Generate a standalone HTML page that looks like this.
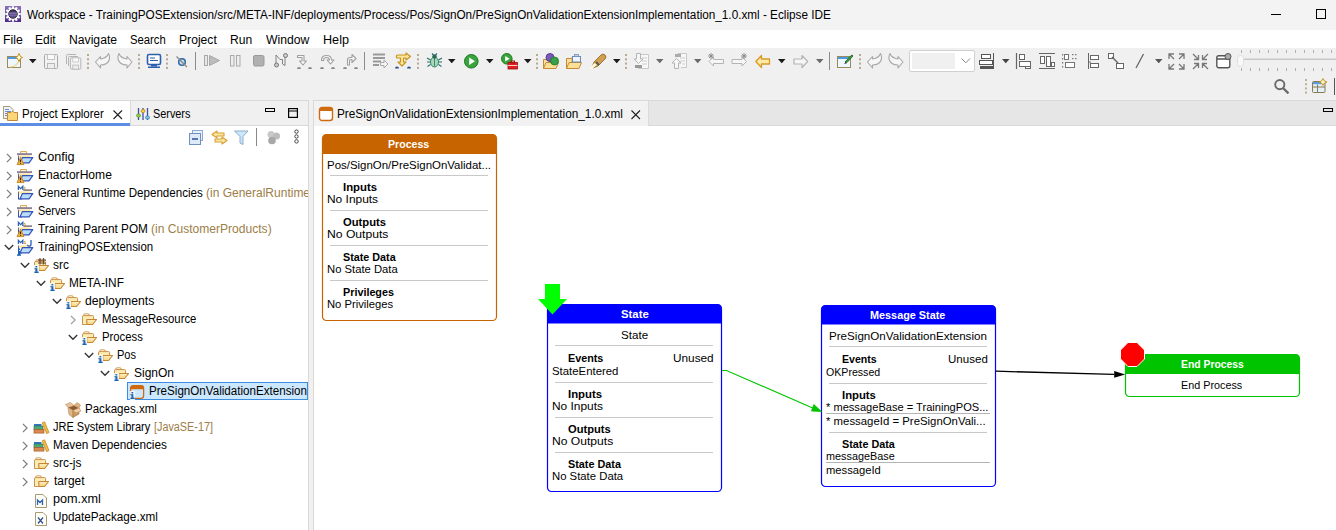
<!DOCTYPE html>
<html><head><meta charset="utf-8">
<style>
*{margin:0;padding:0;box-sizing:border-box}
html,body{width:1336px;height:530px;overflow:hidden;background:#f0f0f0;font-family:"Liberation Sans",sans-serif;font-size:12px;color:#000}
.a{position:absolute}
.t{position:absolute;white-space:nowrap;transform-origin:0 0}
svg{position:absolute;overflow:visible}
</style></head><body>
<!-- title bar -->
<div class="a" style="left:0;top:0;width:1336px;height:30px;background:#f3f3f3"></div>
<!-- menu bar -->
<div class="a" style="left:0;top:30px;width:1336px;height:18px;background:#fff"></div>
<!-- toolbar -->
<div class="a" style="left:0;top:48px;width:1336px;height:52px;background:#f0f0f0"></div>
<!-- left panel -->
<div class="a" style="left:0;top:100px;width:309px;height:430px;background:#fff;border-top:1px solid #d9d9d9;border-right:1px solid #d9d9d9"></div>
<div class="a" style="left:0;top:101px;width:308px;height:25px;background:#f0f0f0;border-bottom:1px solid #d9d9d9"></div>
<div class="a" style="left:0;top:101px;width:130px;height:25px;background:#fff"></div>
<div class="a" style="left:130px;top:101px;width:1px;height:25px;background:#dadada"></div>
<div class="a" style="left:0;top:123px;width:130px;height:3px;background:#5b8ee4"></div>
<!-- editor panel -->
<div class="a" style="left:313px;top:100px;width:1023px;height:430px;background:#fff;border-top:1px solid #d9d9d9;border-left:1px solid #d9d9d9"></div>
<div class="a" style="left:314px;top:101px;width:1022px;height:25px;background:#e6e6e6;border-bottom:1px solid #d9d9d9"></div>
<div class="a" style="left:314px;top:101px;width:334px;height:25px;background:#f2f2f2"></div>
<div class="a" style="left:648px;top:101px;width:1px;height:25px;background:#dadada"></div>
<!-- selection -->
<div class="a" style="left:127px;top:382px;width:181px;height:18px;background:#cce8ff;border:1px solid #3d8ee0"></div>
<svg style="left:322px;top:134px" width="175" height="187" viewBox="0 0 175 187" ><path d="M0.5 20 V4.5 A4 4 0 0 1 4.5 0.5 H170.5 A4 4 0 0 1 174.5 4.5 V20 Z" fill="#c86400"/><rect x="0.5" y="0.5" width="174" height="186" rx="4" ry="4" fill="none" stroke="#c86400" stroke-width="1.2"/></svg>
<svg style="left:547px;top:304px" width="175" height="188" viewBox="0 0 175 188" ><path d="M0.5 19.5 V4.5 A4 4 0 0 1 4.5 0.5 H170.5 A4 4 0 0 1 174.5 4.5 V19.5 Z" fill="#0000ff"/><rect x="0.5" y="0.5" width="174" height="187" rx="4" ry="4" fill="none" stroke="#0000ff" stroke-width="1.2"/></svg>
<svg style="left:821px;top:305px" width="175" height="182" viewBox="0 0 175 182" ><path d="M0.5 19.5 V4.5 A4 4 0 0 1 4.5 0.5 H170.5 A4 4 0 0 1 174.5 4.5 V19.5 Z" fill="#0000ff"/><rect x="0.5" y="0.5" width="174" height="181" rx="4" ry="4" fill="none" stroke="#0000ff" stroke-width="1.2"/></svg>
<svg style="left:1125px;top:354px" width="175" height="43" viewBox="0 0 175 43" ><path d="M0.5 20 V4.5 A4 4 0 0 1 4.5 0.5 H170.5 A4 4 0 0 1 174.5 4.5 V20 Z" fill="#00c400"/><rect x="0.5" y="0.5" width="174" height="42" rx="4" ry="4" fill="none" stroke="#00c400" stroke-width="1.2"/></svg>
<div class="a" style="left:330px;top:175px;width:158px;height:1px;background:#c8c8c8"></div>
<div class="a" style="left:330px;top:210px;width:158px;height:1px;background:#c8c8c8"></div>
<div class="a" style="left:330px;top:245px;width:158px;height:1px;background:#c8c8c8"></div>
<div class="a" style="left:330px;top:280px;width:158px;height:1px;background:#c8c8c8"></div>
<div class="a" style="left:555px;top:345px;width:158px;height:1px;background:#c8c8c8"></div>
<div class="a" style="left:555px;top:382px;width:158px;height:1px;background:#c8c8c8"></div>
<div class="a" style="left:555px;top:417px;width:158px;height:1px;background:#c8c8c8"></div>
<div class="a" style="left:555px;top:452px;width:158px;height:1px;background:#c8c8c8"></div>
<div class="a" style="left:829px;top:346px;width:158px;height:1px;background:#c8c8c8"></div>
<div class="a" style="left:829px;top:383px;width:158px;height:1px;background:#c8c8c8"></div>
<div class="a" style="left:829px;top:432px;width:158px;height:1px;background:#c8c8c8"></div>
<div class="a" style="left:826px;top:413px;width:164px;height:1px;background:#b4b4b4"></div>
<div class="a" style="left:826px;top:462px;width:164px;height:1px;background:#b4b4b4"></div>
<svg style="left:538px;top:283px" width="30" height="33" viewBox="0 0 30 33" ><path d="M7 1 H22 V16 H29 L14.5 31.5 L0 16 H7 Z" fill="#00ff00"/></svg>
<svg style="left:1120px;top:342px" width="26" height="26" viewBox="0 0 26 26" ><path d="M8 0.5 H17 L24.5 8 V17 L17 24.5 H8 L0.5 17 V8 Z" fill="#ff0000" stroke="#fff" stroke-width="1"/></svg>
<svg style="left:715px;top:360px" width="120" height="60" viewBox="0 0 120 60" ><path d="M7 10.5 H11.5 L100 49" fill="none" stroke="#00c400" stroke-width="1.1"/><path d="M106.5 51.5 L96.5 51 L98.8 44.5 Z" fill="#00c400" stroke="#00c400" stroke-width="0.8"/></svg>
<svg style="left:990px;top:360px" width="140" height="25" viewBox="0 0 140 25" ><path d="M6 11.2 L124 14.3" fill="none" stroke="#000" stroke-width="1.3"/><path d="M135.2 14.4 L124.2 11 L124.2 17.8 Z" fill="#000"/></svg>
<svg style="left:5px;top:6px" width="16" height="16" viewBox="0 0 16 16" ><defs><linearGradient id="lg" x1="0" y1="0" x2="0" y2="1"><stop offset="0" stop-color="#8a72b8"/><stop offset="0.5" stop-color="#6a4fa0"/><stop offset="1" stop-color="#4c2a8a"/></linearGradient><linearGradient id="lc" x1="0" y1="0" x2="0" y2="1"><stop offset="0" stop-color="#3a3058"/><stop offset="1" stop-color="#6a58a0"/></linearGradient></defs><rect x="0" y="0" width="16" height="16" fill="url(#lg)"/><g fill="#fff"><circle cx="8" cy="8" r="6"/><rect x="6.9" y="0.3" width="2.2" height="3" transform="rotate(0 8 8)"/><rect x="6.9" y="0.3" width="2.2" height="3" transform="rotate(30 8 8)"/><rect x="6.9" y="0.3" width="2.2" height="3" transform="rotate(60 8 8)"/><rect x="6.9" y="0.3" width="2.2" height="3" transform="rotate(90 8 8)"/><rect x="6.9" y="0.3" width="2.2" height="3" transform="rotate(120 8 8)"/><rect x="6.9" y="0.3" width="2.2" height="3" transform="rotate(150 8 8)"/><rect x="6.9" y="0.3" width="2.2" height="3" transform="rotate(180 8 8)"/><rect x="6.9" y="0.3" width="2.2" height="3" transform="rotate(210 8 8)"/><rect x="6.9" y="0.3" width="2.2" height="3" transform="rotate(240 8 8)"/><rect x="6.9" y="0.3" width="2.2" height="3" transform="rotate(270 8 8)"/><rect x="6.9" y="0.3" width="2.2" height="3" transform="rotate(300 8 8)"/><rect x="6.9" y="0.3" width="2.2" height="3" transform="rotate(330 8 8)"/></g><circle cx="8" cy="8" r="4.3" fill="url(#lc)" stroke="#111" stroke-width="0.8"/><rect x="4" y="6.6" width="8" height="1" fill="#9a8ac8"/><rect x="4" y="8.6" width="8" height="1" fill="#8a78b8"/></svg>
<div class="a" style="left:1271px;top:14px;width:10px;height:1px;background:#000"></div>
<div class="a" style="left:1316px;top:9px;width:10px;height:10px;border:1px solid #000"></div>
<svg style="left:2px;top:106px" width="16" height="16" viewBox="0 0 16 16" ><path d="M1.5 0.5 H8 L11 3.5 V12.5 H1.5 Z" fill="#eef2fa" stroke="#a89a72"/><g stroke="#6a8fd0"><path d="M3 3.5 H7 M3 5.5 H9 M3 7.5 H9 M3 9.5 H9"/></g><path d="M5.5 6.5 H9 L10 5.5 H11 L12 6.5 H15.5 V14.5 H5.5 Z" fill="#fbd677" stroke="#c1873a"/></svg>
<svg style="left:113px;top:110px" width="10" height="10" viewBox="0 0 10 10" ><path d="M0.5 0.5 L9 9 M9 0.5 L0.5 9" stroke="#222" stroke-width="1.1"/></svg>
<svg style="left:136px;top:107px" width="14" height="14" viewBox="0 0 14 14" ><g stroke="#3d4fa0" stroke-width="1.3"><path d="M2.5 1 V13 M7 1 V13 M11.5 1 V13"/></g><rect x="0.5" y="7" width="4" height="3" rx="1.5" fill="#9ad05a" stroke="#5a9a2a" stroke-width="0.8"/><rect x="5" y="2.5" width="4" height="3" rx="1.5" fill="#f7d047" stroke="#b88b10" stroke-width="0.8"/><rect x="9.5" y="9" width="4" height="3" rx="1.5" fill="#7cc3ea" stroke="#3a86b8" stroke-width="0.8"/></svg>
<div class="a" style="left:265px;top:108px;width:10px;height:4px;border:1.3px solid #000"></div>
<svg style="left:288px;top:108px" width="10" height="10" viewBox="0 0 10 10" ><rect x="0.6" y="0.6" width="8.8" height="8.8" fill="none" stroke="#000" stroke-width="1.2"/><path d="M0.5 3 H9.5" stroke="#000" stroke-width="1"/></svg>
<svg style="left:189px;top:130px" width="15" height="15" viewBox="0 0 15 15" ><rect x="3.5" y="0.5" width="10" height="10" fill="#e8f0fa" stroke="#8aa8d0"/><rect x="0.5" y="3.5" width="11" height="11" fill="#dfeaf8" stroke="#6e8fc0"/><path d="M3 9 H9" stroke="#2a4f9a" stroke-width="1.5"/></svg>
<svg style="left:211px;top:130px" width="17" height="15" viewBox="0 0 17 15" ><path d="M6 1 L1 4.5 L6 8 V6 H13 V3 H6 Z" fill="#fce6a4" stroke="#d8a030" stroke-width="1.1" stroke-linejoin="round"/><path d="M11 7 L16 10.5 L11 14 V12 H4 V9 H11 Z" fill="#fce6a4" stroke="#d8a030" stroke-width="1.1" stroke-linejoin="round"/></svg>
<svg style="left:234px;top:130px" width="15" height="15" viewBox="0 0 15 15" ><path d="M0.5 1 H14 L9 6.5 V14.5 L6 13 V6.5 Z" fill="#cfe6f8" stroke="#8aaed0"/></svg>
<div class="a" style="left:256px;top:128px;width:1px;height:18px;background:#888"></div>
<svg style="left:266px;top:130px" width="15" height="15" viewBox="0 0 15 15" ><circle cx="5" cy="4.5" r="3.5" fill="#c8c8c8"/><circle cx="10.5" cy="6" r="3.5" fill="#bdbdbd"/><circle cx="6" cy="10.5" r="3.8" fill="#a8a8a8"/></svg>
<svg style="left:293px;top:129px" width="8" height="17" viewBox="0 0 8 17" ><g fill="none" stroke="#444" stroke-width="1"><circle cx="3.5" cy="2.6" r="1.7"/><circle cx="3.5" cy="7.5" r="1.7"/><circle cx="3.5" cy="12.4" r="1.7"/></g></svg>
<svg style="left:318px;top:106px" width="16" height="16" viewBox="0 0 16 16" ><rect x="1.5" y="1.5" width="13" height="13" rx="2.5" fill="#fff" stroke="#d06a10" stroke-width="1.4"/><path d="M1.5 4 V3.5 Q1.5 1.5 4 1.5 H12 Q14.5 1.5 14.5 4 V5 H1.5 Z" fill="#d06a10"/></svg>
<svg style="left:631px;top:110px" width="10" height="10" viewBox="0 0 10 10" ><path d="M0.5 0.5 L9 9 M9 0.5 L0.5 9" stroke="#222" stroke-width="1.1"/></svg>
<div class="a" style="left:1323px;top:108px;width:10px;height:4px;border:1.3px solid #000"></div>
<svg style="left:6px;top:153px" width="7" height="10" viewBox="0 0 7 10" ><path d="M0.9 0.8 L5.1 5 L0.9 9.2" fill="none" stroke="#7a7a7a" stroke-width="1.15"/></svg>
<svg style="left:6px;top:171px" width="7" height="10" viewBox="0 0 7 10" ><path d="M0.9 0.8 L5.1 5 L0.9 9.2" fill="none" stroke="#7a7a7a" stroke-width="1.15"/></svg>
<svg style="left:6px;top:189px" width="7" height="10" viewBox="0 0 7 10" ><path d="M0.9 0.8 L5.1 5 L0.9 9.2" fill="none" stroke="#7a7a7a" stroke-width="1.15"/></svg>
<svg style="left:6px;top:207px" width="7" height="10" viewBox="0 0 7 10" ><path d="M0.9 0.8 L5.1 5 L0.9 9.2" fill="none" stroke="#7a7a7a" stroke-width="1.15"/></svg>
<svg style="left:6px;top:225px" width="7" height="10" viewBox="0 0 7 10" ><path d="M0.9 0.8 L5.1 5 L0.9 9.2" fill="none" stroke="#7a7a7a" stroke-width="1.15"/></svg>
<svg style="left:4px;top:244px" width="10" height="7" viewBox="0 0 10 7" ><path d="M0.8 1 L5 5.3 L9.2 1" fill="none" stroke="#333" stroke-width="1.3"/></svg>
<svg style="left:20px;top:262px" width="10" height="7" viewBox="0 0 10 7" ><path d="M0.8 1 L5 5.3 L9.2 1" fill="none" stroke="#333" stroke-width="1.3"/></svg>
<svg style="left:36px;top:280px" width="10" height="7" viewBox="0 0 10 7" ><path d="M0.8 1 L5 5.3 L9.2 1" fill="none" stroke="#333" stroke-width="1.3"/></svg>
<svg style="left:52px;top:298px" width="10" height="7" viewBox="0 0 10 7" ><path d="M0.8 1 L5 5.3 L9.2 1" fill="none" stroke="#333" stroke-width="1.3"/></svg>
<svg style="left:68px;top:334px" width="10" height="7" viewBox="0 0 10 7" ><path d="M0.8 1 L5 5.3 L9.2 1" fill="none" stroke="#333" stroke-width="1.3"/></svg>
<svg style="left:84px;top:352px" width="10" height="7" viewBox="0 0 10 7" ><path d="M0.8 1 L5 5.3 L9.2 1" fill="none" stroke="#333" stroke-width="1.3"/></svg>
<svg style="left:100px;top:370px" width="10" height="7" viewBox="0 0 10 7" ><path d="M0.8 1 L5 5.3 L9.2 1" fill="none" stroke="#333" stroke-width="1.3"/></svg>
<svg style="left:70px;top:315px" width="7" height="10" viewBox="0 0 7 10" ><path d="M0.9 0.8 L5.1 5 L0.9 9.2" fill="none" stroke="#999" stroke-width="1.15"/></svg>
<svg style="left:22px;top:423px" width="7" height="10" viewBox="0 0 7 10" ><path d="M0.9 0.8 L5.1 5 L0.9 9.2" fill="none" stroke="#7a7a7a" stroke-width="1.15"/></svg>
<svg style="left:22px;top:441px" width="7" height="10" viewBox="0 0 7 10" ><path d="M0.9 0.8 L5.1 5 L0.9 9.2" fill="none" stroke="#7a7a7a" stroke-width="1.15"/></svg>
<svg style="left:22px;top:459px" width="7" height="10" viewBox="0 0 7 10" ><path d="M0.9 0.8 L5.1 5 L0.9 9.2" fill="none" stroke="#7a7a7a" stroke-width="1.15"/></svg>
<svg style="left:22px;top:477px" width="7" height="10" viewBox="0 0 7 10" ><path d="M0.9 0.8 L5.1 5 L0.9 9.2" fill="none" stroke="#7a7a7a" stroke-width="1.15"/></svg>
<svg style="left:17px;top:151px" width="16" height="16" viewBox="0 0 16 16" ><path d="M3.5 0.5 H9.5 V3 H3.5 Z" fill="#fff6da" stroke="#d9ad5c"/><path d="M1.5 4.6 V12 M1 12 H5" stroke="#3a4fb0" stroke-width="1"/><rect x="0" y="2.2" width="15" height="1.9" fill="#8f8199"/><rect x="1.8" y="4.4" width="11.5" height="2.4" fill="#fde8a0"/><path d="M5.5 6.6 H15.8 L12 11.8 H3 Z" fill="#b9dcf8" stroke="#3352bb" stroke-width="1.2" stroke-linejoin="round"/><path d="M3.5 6.3 L7 13.6 H0 Z" fill="#eab045" stroke="#c4861e" stroke-width="0.9" stroke-linejoin="round"/><path d="M3.5 8.6 V11" stroke="#402000" stroke-width="1.1"/><rect x="3" y="11.8" width="1" height="1" fill="#402000"/></svg>
<svg style="left:17px;top:169px" width="16" height="16" viewBox="0 0 16 16" ><path d="M3.5 0.5 H9.5 V3 H3.5 Z" fill="#fff6da" stroke="#d9ad5c"/><path d="M1.5 4.6 V12 M1 12 H5" stroke="#3a4fb0" stroke-width="1"/><rect x="0" y="2.2" width="15" height="1.9" fill="#8f8199"/><rect x="1.8" y="4.4" width="11.5" height="2.4" fill="#fde8a0"/><path d="M5.5 6.6 H15.8 L12 11.8 H3 Z" fill="#b9dcf8" stroke="#3352bb" stroke-width="1.2" stroke-linejoin="round"/><path d="M3.5 6.3 L7 13.6 H0 Z" fill="#eab045" stroke="#c4861e" stroke-width="0.9" stroke-linejoin="round"/><path d="M3.5 8.6 V11" stroke="#402000" stroke-width="1.1"/><rect x="3" y="11.8" width="1" height="1" fill="#402000"/></svg>
<svg style="left:17px;top:187px" width="16" height="16" viewBox="0 0 16 16" ><path d="M1.5 4.6 V12 M1 12 H5" stroke="#3a4fb0" stroke-width="1"/><rect x="6.3" y="2.3" width="8.7" height="1.7" fill="#8f8199"/><rect x="1.8" y="4.4" width="11.5" height="2.4" fill="#fde8a0"/><path d="M5.5 6.6 H15.8 L12 11.8 H3 Z" fill="#b9dcf8" stroke="#3352bb" stroke-width="1.2" stroke-linejoin="round"/><path d="M1.4 3 V-0.6 L3.6 1.6 L5.8 -0.6 V3" fill="none" stroke="#2c62b0" stroke-width="1.3"/><path d="M6.8 0.4 H8 V2.6 M7 2.6 H9" fill="none" stroke="#c89a3a" stroke-width="0.9"/></svg>
<svg style="left:17px;top:205px" width="16" height="16" viewBox="0 0 16 16" ><path d="M3.5 0.5 H9.5 V3 H3.5 Z" fill="#fff6da" stroke="#d9ad5c"/><path d="M1.5 4.6 V12 M1 12 H5" stroke="#3a4fb0" stroke-width="1"/><rect x="0" y="2.2" width="15" height="1.9" fill="#8f8199"/><rect x="1.8" y="4.4" width="11.5" height="2.4" fill="#fde8a0"/><path d="M5.5 6.6 H15.8 L12 11.8 H3 Z" fill="#b9dcf8" stroke="#3352bb" stroke-width="1.2" stroke-linejoin="round"/></svg>
<svg style="left:17px;top:223px" width="16" height="16" viewBox="0 0 16 16" ><path d="M1.5 4.6 V12 M1 12 H5" stroke="#3a4fb0" stroke-width="1"/><rect x="6.3" y="2.3" width="8.7" height="1.7" fill="#8f8199"/><rect x="1.8" y="4.4" width="11.5" height="2.4" fill="#fde8a0"/><path d="M5.5 6.6 H15.8 L12 11.8 H3 Z" fill="#b9dcf8" stroke="#3352bb" stroke-width="1.2" stroke-linejoin="round"/><path d="M1.4 3 V-0.6 L3.6 1.6 L5.8 -0.6 V3" fill="none" stroke="#2c62b0" stroke-width="1.3"/><path d="M6.8 0.4 H8 V2.6 M7 2.6 H9" fill="none" stroke="#c89a3a" stroke-width="0.9"/><path d="M3.5 6.3 L7 13.6 H0 Z" fill="#eab045" stroke="#c4861e" stroke-width="0.9" stroke-linejoin="round"/><path d="M3.5 8.6 V11" stroke="#402000" stroke-width="1.1"/><rect x="3" y="11.8" width="1" height="1" fill="#402000"/></svg>
<svg style="left:17px;top:241px" width="16" height="16" viewBox="0 0 16 16" ><path d="M1.5 4.6 V12 M1 12 H5" stroke="#3a4fb0" stroke-width="1"/><rect x="1.8" y="4.4" width="11.5" height="2.4" fill="#fde8a0"/><path d="M5.5 6.6 H15.8 L12 11.8 H3 Z" fill="#b9dcf8" stroke="#3352bb" stroke-width="1.2" stroke-linejoin="round"/><path d="M1.4 3 V-0.6 L3.6 1.6 L5.8 -0.6 V3" fill="none" stroke="#2c62b0" stroke-width="1.3"/><path d="M6.8 0.4 H8 V2.6 M7 2.6 H9" fill="none" stroke="#c89a3a" stroke-width="0.9"/><path d="M14 -1 V3.5 Q14 5.2 12 5.2 Q10.4 5.2 10.4 3.8" fill="none" stroke="#2c62b0" stroke-width="1.3"/><g fill="#1a62b8"><rect x="1" y="7.5" width="2" height="1.6"/><rect x="1" y="10" width="2" height="4"/><rect x="0" y="13.4" width="4" height="1.4"/></g></svg>
<svg style="left:33px;top:259px" width="16" height="16" viewBox="0 0 16 16" ><defs><linearGradient id="fg" x1="0" y1="0" x2="0" y2="1"><stop offset="0" stop-color="#fff1c4"/><stop offset="1" stop-color="#f6d27a"/></linearGradient></defs><path d="M2.5 2.6 Q2.5 0.8 4.2 0.8 H6.8 Q8.5 0.8 8.5 2.6" fill="#fffaf0" stroke="#d29b52" stroke-width="1"/><path d="M1.5 11.5 V3.6 Q1.5 2.6 2.5 2.6 H11.6 Q12.6 2.6 12.6 3.6 V6.5" fill="#fcebb4" stroke="#c8924a" stroke-width="1"/><path d="M1.5 11.5 V6 H12.6" fill="#fcebb4" stroke="none"/><path d="M5.8 6.5 H15.6 L11.6 11.5 H5.8 Z" fill="url(#fg)" stroke="#c4873a" stroke-width="1.1" stroke-linejoin="round"/><path d="M1.5 3.5 V11.5 H6" fill="none" stroke="#c8924a" stroke-width="1"/><path d="M7 -1 V5.5 M10.5 -1 V5.5 M5 1.2 H13 M5 4 H13" stroke="#6b4a2a" stroke-width="1.2"/><g fill="#fff" opacity="0.85"><rect x="1" y="6" width="5" height="9"/></g><g fill="#1764b8"><rect x="2.4" y="6.9" width="2" height="1.6" rx="0.5"/><rect x="2.4" y="9.2" width="2" height="3.6"/><rect x="1.4" y="9.2" width="1.4" height="1"/><rect x="1.3" y="12.5" width="4.4" height="1.5" rx="0.4"/></g></svg>
<svg style="left:49px;top:277px" width="16" height="16" viewBox="0 0 16 16" ><path d="M2.5 2.6 Q2.5 0.8 4.2 0.8 H6.8 Q8.5 0.8 8.5 2.6" fill="#fffaf0" stroke="#d29b52" stroke-width="1"/><path d="M1.5 11.5 V3.6 Q1.5 2.6 2.5 2.6 H11.6 Q12.6 2.6 12.6 3.6 V6.5" fill="#fcebb4" stroke="#c8924a" stroke-width="1"/><path d="M1.5 11.5 V6 H12.6" fill="#fcebb4" stroke="none"/><path d="M5.8 6.5 H15.6 L11.6 11.5 H5.8 Z" fill="url(#fg)" stroke="#c4873a" stroke-width="1.1" stroke-linejoin="round"/><path d="M1.5 3.5 V11.5 H6" fill="none" stroke="#c8924a" stroke-width="1"/><g fill="#fff" opacity="0.85"><rect x="1" y="6" width="5" height="9"/></g><g fill="#1764b8"><rect x="2.4" y="6.9" width="2" height="1.6" rx="0.5"/><rect x="2.4" y="9.2" width="2" height="3.6"/><rect x="1.4" y="9.2" width="1.4" height="1"/><rect x="1.3" y="12.5" width="4.4" height="1.5" rx="0.4"/></g></svg>
<svg style="left:65px;top:295px" width="16" height="16" viewBox="0 0 16 16" ><path d="M2.5 2.6 Q2.5 0.8 4.2 0.8 H6.8 Q8.5 0.8 8.5 2.6" fill="#fffaf0" stroke="#d29b52" stroke-width="1"/><path d="M1.5 11.5 V3.6 Q1.5 2.6 2.5 2.6 H11.6 Q12.6 2.6 12.6 3.6 V6.5" fill="#fcebb4" stroke="#c8924a" stroke-width="1"/><path d="M1.5 11.5 V6 H12.6" fill="#fcebb4" stroke="none"/><path d="M5.8 6.5 H15.6 L11.6 11.5 H5.8 Z" fill="url(#fg)" stroke="#c4873a" stroke-width="1.1" stroke-linejoin="round"/><path d="M1.5 3.5 V11.5 H6" fill="none" stroke="#c8924a" stroke-width="1"/><g fill="#fff" opacity="0.85"><rect x="1" y="6" width="5" height="9"/></g><g fill="#1764b8"><rect x="2.4" y="6.9" width="2" height="1.6" rx="0.5"/><rect x="2.4" y="9.2" width="2" height="3.6"/><rect x="1.4" y="9.2" width="1.4" height="1"/><rect x="1.3" y="12.5" width="4.4" height="1.5" rx="0.4"/></g></svg>
<svg style="left:81px;top:313px" width="16" height="16" viewBox="0 0 16 16" ><path d="M2.5 2.6 Q2.5 0.8 4.2 0.8 H6.8 Q8.5 0.8 8.5 2.6" fill="#fffaf0" stroke="#d29b52" stroke-width="1"/><path d="M1.5 11.5 V3.6 Q1.5 2.6 2.5 2.6 H11.6 Q12.6 2.6 12.6 3.6 V6.5" fill="#fcebb4" stroke="#c8924a" stroke-width="1"/><path d="M1.5 11.5 V6 H12.6" fill="#fcebb4" stroke="none"/><path d="M5.8 6.5 H15.6 L11.6 11.5 H5.8 Z" fill="url(#fg)" stroke="#c4873a" stroke-width="1.1" stroke-linejoin="round"/><path d="M1.5 3.5 V11.5 H6" fill="none" stroke="#c8924a" stroke-width="1"/></svg>
<svg style="left:81px;top:331px" width="16" height="16" viewBox="0 0 16 16" ><path d="M2.5 2.6 Q2.5 0.8 4.2 0.8 H6.8 Q8.5 0.8 8.5 2.6" fill="#fffaf0" stroke="#d29b52" stroke-width="1"/><path d="M1.5 11.5 V3.6 Q1.5 2.6 2.5 2.6 H11.6 Q12.6 2.6 12.6 3.6 V6.5" fill="#fcebb4" stroke="#c8924a" stroke-width="1"/><path d="M1.5 11.5 V6 H12.6" fill="#fcebb4" stroke="none"/><path d="M5.8 6.5 H15.6 L11.6 11.5 H5.8 Z" fill="url(#fg)" stroke="#c4873a" stroke-width="1.1" stroke-linejoin="round"/><path d="M1.5 3.5 V11.5 H6" fill="none" stroke="#c8924a" stroke-width="1"/><g fill="#fff" opacity="0.85"><rect x="1" y="6" width="5" height="9"/></g><g fill="#1764b8"><rect x="2.4" y="6.9" width="2" height="1.6" rx="0.5"/><rect x="2.4" y="9.2" width="2" height="3.6"/><rect x="1.4" y="9.2" width="1.4" height="1"/><rect x="1.3" y="12.5" width="4.4" height="1.5" rx="0.4"/></g></svg>
<svg style="left:97px;top:349px" width="16" height="16" viewBox="0 0 16 16" ><path d="M2.5 2.6 Q2.5 0.8 4.2 0.8 H6.8 Q8.5 0.8 8.5 2.6" fill="#fffaf0" stroke="#d29b52" stroke-width="1"/><path d="M1.5 11.5 V3.6 Q1.5 2.6 2.5 2.6 H11.6 Q12.6 2.6 12.6 3.6 V6.5" fill="#fcebb4" stroke="#c8924a" stroke-width="1"/><path d="M1.5 11.5 V6 H12.6" fill="#fcebb4" stroke="none"/><path d="M5.8 6.5 H15.6 L11.6 11.5 H5.8 Z" fill="url(#fg)" stroke="#c4873a" stroke-width="1.1" stroke-linejoin="round"/><path d="M1.5 3.5 V11.5 H6" fill="none" stroke="#c8924a" stroke-width="1"/><g fill="#fff" opacity="0.85"><rect x="1" y="6" width="5" height="9"/></g><g fill="#1764b8"><rect x="2.4" y="6.9" width="2" height="1.6" rx="0.5"/><rect x="2.4" y="9.2" width="2" height="3.6"/><rect x="1.4" y="9.2" width="1.4" height="1"/><rect x="1.3" y="12.5" width="4.4" height="1.5" rx="0.4"/></g></svg>
<svg style="left:113px;top:367px" width="16" height="16" viewBox="0 0 16 16" ><path d="M2.5 2.6 Q2.5 0.8 4.2 0.8 H6.8 Q8.5 0.8 8.5 2.6" fill="#fffaf0" stroke="#d29b52" stroke-width="1"/><path d="M1.5 11.5 V3.6 Q1.5 2.6 2.5 2.6 H11.6 Q12.6 2.6 12.6 3.6 V6.5" fill="#fcebb4" stroke="#c8924a" stroke-width="1"/><path d="M1.5 11.5 V6 H12.6" fill="#fcebb4" stroke="none"/><path d="M5.8 6.5 H15.6 L11.6 11.5 H5.8 Z" fill="url(#fg)" stroke="#c4873a" stroke-width="1.1" stroke-linejoin="round"/><path d="M1.5 3.5 V11.5 H6" fill="none" stroke="#c8924a" stroke-width="1"/><g fill="#fff" opacity="0.85"><rect x="1" y="6" width="5" height="9"/></g><g fill="#1764b8"><rect x="2.4" y="6.9" width="2" height="1.6" rx="0.5"/><rect x="2.4" y="9.2" width="2" height="3.6"/><rect x="1.4" y="9.2" width="1.4" height="1"/><rect x="1.3" y="12.5" width="4.4" height="1.5" rx="0.4"/></g></svg>
<svg style="left:129px;top:384px" width="16" height="16" viewBox="0 0 16 16" ><rect x="1.6" y="1.6" width="13" height="12.8" rx="2.6" fill="none" stroke="#cf6a12" stroke-width="1.3"/><path d="M1.4 5.2 V4 Q1.4 1.4 4 1.4 H12.2 Q14.8 1.4 14.8 4 V5.2 Z" fill="#cf6a12"/><g fill="#fff" opacity="0.85"><rect x="1" y="7" width="5" height="9"/></g><g fill="#1764b8"><rect x="2.4" y="7.9" width="2" height="1.6" rx="0.5"/><rect x="2.4" y="10.2" width="2" height="3.6"/><rect x="1.4" y="10.2" width="1.4" height="1"/><rect x="1.3" y="13.5" width="4.4" height="1.5" rx="0.4"/></g></svg>
<svg style="left:65px;top:401.5px" width="16" height="16" viewBox="0 0 16 16" ><path d="M3 5.5 L9 3.5 L14 6 L8 8.5 Z" fill="#8a5a30"/><path d="M3 5.5 L8 8.5 V15.5 L4 12.5 Z" fill="#e0b886" stroke="#b48450" stroke-width="0.6"/><path d="M8 8.5 L14 6 V12 L8 15.5 Z" fill="#c99a62" stroke="#a87440" stroke-width="0.6"/><path d="M3 5.5 L0.5 2.5 L5.5 0.5 L9 3.5 Z" fill="#e8c498" stroke="#b88a55" stroke-width="0.6"/><path d="M9 3.5 L12 0.5 L15.5 3 L14 6 Z" fill="#dcb283" stroke="#b88a55" stroke-width="0.6"/><path d="M14 6 L16 9 L11 11 L8 8.5 Z" fill="#f0d0a8" stroke="#b88a55" stroke-width="0.6"/></svg>
<svg style="left:33px;top:421px" width="16" height="16" viewBox="0 0 16 16" ><rect x="1" y="3" width="7.5" height="2" fill="#2f78c0"/><rect x="1" y="5" width="9" height="3.4" fill="#4fa878" stroke="#2f7050" stroke-width="0.6"/><rect x="1" y="8.5" width="10" height="3.6" fill="#d98a4e" stroke="#9a5020" stroke-width="0.6"/><path d="M9.2 1.8 L11.6 0.8 L16 11.6 L13.6 12.6 Z" fill="#f2bc48" stroke="#c98a22" stroke-width="0.8"/></svg>
<svg style="left:33px;top:439px" width="16" height="16" viewBox="0 0 16 16" ><rect x="1" y="3" width="7.5" height="2" fill="#2f78c0"/><rect x="1" y="5" width="9" height="3.4" fill="#4fa878" stroke="#2f7050" stroke-width="0.6"/><rect x="1" y="8.5" width="10" height="3.6" fill="#d98a4e" stroke="#9a5020" stroke-width="0.6"/><path d="M9.2 1.8 L11.6 0.8 L16 11.6 L13.6 12.6 Z" fill="#f2bc48" stroke="#c98a22" stroke-width="0.8"/></svg>
<svg style="left:33px;top:457px" width="16" height="16" viewBox="0 0 16 16" ><path d="M2.5 2.6 Q2.5 0.8 4.2 0.8 H6.8 Q8.5 0.8 8.5 2.6" fill="#fffaf0" stroke="#d29b52" stroke-width="1"/><path d="M1.5 11.5 V3.6 Q1.5 2.6 2.5 2.6 H11.6 Q12.6 2.6 12.6 3.6 V6.5" fill="#fcebb4" stroke="#c8924a" stroke-width="1"/><path d="M1.5 11.5 V6 H12.6" fill="#fcebb4" stroke="none"/><path d="M5.8 6.5 H15.6 L11.6 11.5 H5.8 Z" fill="url(#fg)" stroke="#c4873a" stroke-width="1.1" stroke-linejoin="round"/><path d="M1.5 3.5 V11.5 H6" fill="none" stroke="#c8924a" stroke-width="1"/></svg>
<svg style="left:33px;top:475px" width="16" height="16" viewBox="0 0 16 16" ><path d="M2.5 2.6 Q2.5 0.8 4.2 0.8 H6.8 Q8.5 0.8 8.5 2.6" fill="#fffaf0" stroke="#d29b52" stroke-width="1"/><path d="M1.5 11.5 V3.6 Q1.5 2.6 2.5 2.6 H11.6 Q12.6 2.6 12.6 3.6 V6.5" fill="#fcebb4" stroke="#c8924a" stroke-width="1"/><path d="M1.5 11.5 V6 H12.6" fill="#fcebb4" stroke="none"/><path d="M5.8 6.5 H15.6 L11.6 11.5 H5.8 Z" fill="url(#fg)" stroke="#c4873a" stroke-width="1.1" stroke-linejoin="round"/><path d="M1.5 3.5 V11.5 H6" fill="none" stroke="#c8924a" stroke-width="1"/></svg>
<svg style="left:34px;top:493px" width="14" height="16" viewBox="0 0 14 16" ><path d="M1.5 1.5 H9 L12.5 5 V14.5 H1.5 Z" fill="#fdfdf8" stroke="#a89a72"/><path d="M3.5 12 V7 L6 9.5 L8.5 7 V12" fill="none" stroke="#2c62b0" stroke-width="1.3"/></svg>
<svg style="left:34px;top:511px" width="14" height="16" viewBox="0 0 14 16" ><path d="M1.5 1.5 H9 L12.5 5 V14.5 H1.5 Z" fill="#fdfdf8" stroke="#a89a72"/><path d="M4 6.5 L9 12.5 M9 6.5 L4 12.5" fill="none" stroke="#2c4a90" stroke-width="1.2"/></svg>
<svg style="left:7px;top:53px" width="16" height="16" viewBox="0 0 16 16" ><rect x="0.5" y="3.5" width="13" height="11" fill="#eef7fd" stroke="#9a8a5a"/><rect x="1" y="4" width="12" height="2" fill="#4a9ae0"/><path d="M3 14 Q11 13 12 7" stroke="#f0d890" fill="none" stroke-width="1.5"/><path d="M12 0.5 L13.5 3.5 L15.5 4.5 L13.5 5.5 L12 8.5 L10.5 5.5 L8.5 4.5 L10.5 3.5 Z" fill="#fff8d0" stroke="#c09020" stroke-width="1"/></svg>
<svg style="left:29px;top:59px" width="8" height="5" viewBox="0 0 8 5" ><path d="M0 0 H7.5 L3.75 4.2 Z" fill="#1a1a1a"/></svg>
<svg style="left:44px;top:54px" width="15" height="15" viewBox="0 0 15 15" ><path d="M0.5 1.5 Q0.5 0.5 1.5 0.5 H12.5 Q13.5 0.5 13.5 1.5 V13.5 Q13.5 14.5 12.5 14.5 H1.5 Q0.5 14.5 0.5 13.5 Z" fill="#f2f2f2" stroke="#a8a8a8"/><rect x="3.5" y="0.5" width="7" height="5" fill="#fafafa" stroke="#c4c4c4"/><rect x="3.5" y="9.5" width="7" height="5" fill="#eee" stroke="#b8b8b8"/></svg>
<svg style="left:66px;top:54px" width="17" height="16" viewBox="0 0 17 16" ><path d="M0.5 10 V1.5 Q0.5 0.5 1.5 0.5 H10" fill="none" stroke="#b4b4b4"/><path d="M2.5 12 V3.5 Q2.5 2.5 3.5 2.5 H12" fill="none" stroke="#b4b4b4"/><g transform="translate(4 3.5) scale(0.8)"><path d="M0.5 1.5 Q0.5 0.5 1.5 0.5 H12.5 Q13.5 0.5 13.5 1.5 V13.5 Q13.5 14.5 12.5 14.5 H1.5 Q0.5 14.5 0.5 13.5 Z" fill="#f2f2f2" stroke="#a8a8a8"/><rect x="3.5" y="0.5" width="7" height="5" fill="#fafafa" stroke="#c4c4c4"/><rect x="3.5" y="9.5" width="7" height="5" fill="#eee" stroke="#b8b8b8"/></g></svg>
<svg style="left:87px;top:54px" width="3" height="15" viewBox="0 0 3 15" ><rect x="0" y="0" width="2" height="2" fill="#b8a890"/><rect x="0" y="4.3" width="2" height="2" fill="#b8a890"/><rect x="0" y="8.6" width="2" height="2" fill="#b8a890"/><rect x="0" y="12.9" width="2" height="2" fill="#b8a890"/></svg>
<svg style="left:95px;top:53px" width="16" height="16" viewBox="0 0 16 16" ><path d="M5.5 3.5 L0.5 9 L5.5 15 V12 Q13 12 14.5 6 Q15 3 13.5 0.5 Q12 5 5.5 6 Z" fill="#f6f6f6" stroke="#a8a8a8" stroke-width="1.1" stroke-linejoin="round"/></svg>
<svg style="left:117px;top:53px" width="16" height="16" viewBox="0 0 16 16" ><path d="M10 3.5 L15 9 L10 15 V12 Q2.5 12 1 6 Q0.5 3 2 0.5 Q3.5 5 10 6 Z" fill="#f6f6f6" stroke="#a8a8a8" stroke-width="1.1" stroke-linejoin="round"/></svg>
<svg style="left:138px;top:54px" width="3" height="15" viewBox="0 0 3 15" ><rect x="0" y="0" width="2" height="2" fill="#b8a890"/><rect x="0" y="4.3" width="2" height="2" fill="#b8a890"/><rect x="0" y="8.6" width="2" height="2" fill="#b8a890"/><rect x="0" y="12.9" width="2" height="2" fill="#b8a890"/></svg>
<svg style="left:147px;top:54px" width="14" height="14" viewBox="0 0 14 14" ><rect x="0.5" y="0.5" width="13" height="10" rx="1.5" fill="#fff" stroke="#2c5fb0" stroke-width="1.6"/><path d="M3 4 H8 M3 6.5 H11" stroke="#2c5fb0" stroke-width="1.2"/><rect x="4" y="11" width="6" height="1.5" fill="#2c5fb0"/><rect x="1" y="12.5" width="12" height="1.5" fill="#2c5fb0"/></svg>
<svg style="left:166px;top:54px" width="3" height="15" viewBox="0 0 3 15" ><rect x="0" y="0" width="2" height="2" fill="#b8a890"/><rect x="0" y="4.3" width="2" height="2" fill="#b8a890"/><rect x="0" y="8.6" width="2" height="2" fill="#b8a890"/><rect x="0" y="12.9" width="2" height="2" fill="#b8a890"/></svg>
<svg style="left:176px;top:56px" width="12" height="12" viewBox="0 0 12 12" ><circle cx="6" cy="6" r="3.3" fill="#c8dcec" stroke="#2a6aa0" stroke-width="1.5"/><path d="M0.5 0.5 L11 11" stroke="#888" stroke-width="1.2"/></svg>
<div class="a" style="left:195px;top:52px;width:1px;height:18px;background:#8c8c8c"></div>
<svg style="left:204px;top:55px" width="17" height="13" viewBox="0 0 17 13" ><rect x="0.5" y="0.5" width="3" height="10" fill="#e8e8e8" stroke="#a8a8a8"/><path d="M5.5 0.5 L15.5 5.5 L5.5 10.5 Z" fill="#bcbcbc" stroke="#a8a8a8"/></svg>
<svg style="left:230px;top:55px" width="12" height="12" viewBox="0 0 12 12" ><rect x="0.5" y="0.5" width="3.5" height="10.5" fill="#eee" stroke="#aaa"/><rect x="6.5" y="0.5" width="3.5" height="10.5" fill="#eee" stroke="#aaa"/></svg>
<svg style="left:253px;top:55px" width="12" height="12" viewBox="0 0 12 12" ><rect x="0.5" y="0.5" width="10.5" height="10.5" rx="1.5" fill="#b0b0b0" stroke="#9a9a9a"/></svg>
<svg style="left:274px;top:53px" width="15" height="15" viewBox="0 0 15 15" ><path d="M2 12 V2 L6 6.5 H8.5 V11 L11 12.5 V2.5" fill="none" stroke="#777" stroke-width="0.9"/><circle cx="2.5" cy="12" r="2" fill="#ccc" stroke="#777"/><circle cx="11.5" cy="2.5" r="2" fill="#ccc" stroke="#777"/></svg>
<svg style="left:297px;top:54px" width="16" height="16" viewBox="0 0 16 16" ><path d="M0.5 1.5 H7 V7 H9.5 L6 11 L2.5 7 H5 V3.5 H0.5 Z" fill="#f8f8f8" stroke="#a0a0a0" stroke-width="1.1" stroke-linejoin="round"/><path d="M0 15 Q0 13 2 13 Q4 13 4 15 Z M11 15 Q11 13 13 13 Q15 13 15 15 Z" fill="#8a8a8a"/></svg>
<svg style="left:320px;top:54px" width="16" height="16" viewBox="0 0 16 16" ><path d="M1.5 6.5 Q1.5 1.5 6.5 1.5 Q11.5 1.5 11.5 6 H14 L10.5 10 L7 6 H9.5 Q9.5 3.5 6.5 3.5 Q3.5 3.5 3.5 6.5 Z" fill="#f8f8f8" stroke="#a0a0a0" stroke-width="1.1" stroke-linejoin="round"/><path d="M0 15 Q0 13 2 13 Q4 13 4 15 Z M11 15 Q11 13 13 13 Q15 13 15 15 Z" fill="#8a8a8a"/></svg>
<svg style="left:343px;top:54px" width="16" height="16" viewBox="0 0 16 16" ><path d="M4.5 11 V6 Q4.5 3.5 7 3.5 H9 V0.5 L13 4.5 L9 8.5 V5.5 H7.5 Q6.5 5.5 6.5 6.5 V11 Z" fill="#f8f8f8" stroke="#a0a0a0" stroke-width="1.1" stroke-linejoin="round"/><path d="M0 15 Q0 13 2 13 Q4 13 4 15 Z M11 15 Q11 13 13 13 Q15 13 15 15 Z" fill="#8a8a8a"/></svg>
<div class="a" style="left:364px;top:52px;width:1px;height:18px;background:#8c8c8c"></div>
<svg style="left:373px;top:53px" width="16" height="16" viewBox="0 0 16 16" ><path d="M0 1.5 H12 M0 5 H12 M0 8.5 H8 M0 12 H6" stroke="#999" stroke-width="1.8"/><path d="M7.5 9.5 H11 V7 L15 11 L11 15 V12.5 H7.5 Z" fill="#f4f4f4" stroke="#aaa" stroke-linejoin="round"/></svg>
<svg style="left:395px;top:53px" width="17" height="16" viewBox="0 0 17 16" ><path d="M1.5 3.5 Q1 2 3 2 H11 V0 L15.5 3.5 L11 7 V5 H8.5 V9 H11 L7 13 L3 9 H5.5 V5 H3 Q1 5 1.5 3.5 Z" fill="#fde79e" stroke="#c8941e" stroke-linejoin="round" stroke-width="1.2"/><path d="M0 15.5 Q0 13.5 2 13.5 Q4 13.5 4 15.5 Z M12 15.5 Q12 13.5 14 13.5 Q16 13.5 16 15.5 Z" fill="#2a5088"/></svg>
<svg style="left:417px;top:54px" width="3" height="15" viewBox="0 0 3 15" ><rect x="0" y="0" width="2" height="2" fill="#b8a890"/><rect x="0" y="4.3" width="2" height="2" fill="#b8a890"/><rect x="0" y="8.6" width="2" height="2" fill="#b8a890"/><rect x="0" y="12.9" width="2" height="2" fill="#b8a890"/></svg>
<svg style="left:426px;top:53px" width="16" height="16" viewBox="0 0 16 16" ><ellipse cx="8.5" cy="9" rx="4" ry="5" fill="#a8d8b8" stroke="#3a8a70"/><path d="M8.5 4.5 V13.5" stroke="#3a8a70"/><circle cx="8.5" cy="3.5" r="2.2" fill="#2c6a58"/><path d="M1 5 L4.5 7 M1 9 H4.5 M1.5 13.5 L4.5 11.5 M16 5 L12.5 7 M16 9 H12.5 M15.5 13.5 L12.5 11.5 M6 0.5 L7.5 2 M11 0.5 L9.5 2" stroke="#2a7068" stroke-width="1.1"/></svg>
<svg style="left:448px;top:59px" width="8" height="5" viewBox="0 0 8 5" ><path d="M0 0 H7.5 L3.75 4.2 Z" fill="#1a1a1a"/></svg>
<svg style="left:464px;top:54px" width="15" height="15" viewBox="0 0 15 15" ><circle cx="7.3" cy="7.3" r="6.8" fill="#37a43c" stroke="#1e7a25"/><path d="M5.2 3.5 L11 7.3 L5.2 11.1 Z" fill="#fff"/></svg>
<svg style="left:486px;top:59px" width="8" height="5" viewBox="0 0 8 5" ><path d="M0 0 H7.5 L3.75 4.2 Z" fill="#1a1a1a"/></svg>
<svg style="left:501px;top:53px" width="17" height="17" viewBox="0 0 17 17" ><circle cx="5.8" cy="5.8" r="5.3" fill="#37a43c" stroke="#1e7a25"/><path d="M4.2 3 L8.6 5.8 L4.2 8.6 Z" fill="#fff"/><rect x="7" y="9.5" width="9.5" height="6.5" fill="#e02020" stroke="#a01010" stroke-width="0.8"/><rect x="10" y="8" width="3.5" height="2" fill="none" stroke="#a01010"/><path d="M7 12.5 H16.5" stroke="#fff" stroke-width="0.8"/></svg>
<svg style="left:524px;top:59px" width="8" height="5" viewBox="0 0 8 5" ><path d="M0 0 H7.5 L3.75 4.2 Z" fill="#1a1a1a"/></svg>
<svg style="left:536px;top:54px" width="3" height="15" viewBox="0 0 3 15" ><rect x="0" y="0" width="2" height="2" fill="#b8a890"/><rect x="0" y="4.3" width="2" height="2" fill="#b8a890"/><rect x="0" y="8.6" width="2" height="2" fill="#b8a890"/><rect x="0" y="12.9" width="2" height="2" fill="#b8a890"/></svg>
<svg style="left:543px;top:53px" width="17" height="17" viewBox="0 0 17 17" ><path d="M0.5 6.5 H6 V15.5 H0.5 Z" fill="#fce3a0" stroke="#c48a35"/><path d="M0.5 15.5 L3 9.5 H15.5 L13 15.5 Z" fill="#fddf96" stroke="#c48a35"/><circle cx="7" cy="4.5" r="4" fill="#7a5ab8" stroke="#4a2a88" stroke-width="0.8"/><circle cx="11.5" cy="8" r="4" fill="#3aa04a" stroke="#1a7a2a" stroke-width="0.8"/></svg>
<svg style="left:566px;top:53px" width="16" height="17" viewBox="0 0 16 17" ><path d="M0.5 5.5 H5 L6 4.5 V15.5 H0.5 Z" fill="#fce3a0" stroke="#c48a35"/><path d="M0.5 15.5 L3 9.5 H15.5 L13 15.5 Z" fill="#fddf96" stroke="#c48a35"/><rect x="6.5" y="3.5" width="8" height="5.5" fill="#eef4fa" stroke="#6a8ab8"/><rect x="8.5" y="1.5" width="4" height="2" fill="#ccd" stroke="#6a8ab8" stroke-width="0.7"/></svg>
<svg style="left:590px;top:53px" width="17" height="17" viewBox="0 0 17 17" ><path d="M1.5 15.5 L4 9 L11 2 Q13 0 15 2 Q17 4 15 6 L8 13 Z" fill="#d0a050" stroke="#8a6020" stroke-width="0.8"/><path d="M2 15 L5 10 L7 12 Z" fill="#fff8c0"/><path d="M6 9 L9 12" stroke="#555" stroke-width="2"/><path d="M1 16 L5 11" stroke="#fffbe0" stroke-width="2.5"/></svg>
<svg style="left:613px;top:59px" width="8" height="5" viewBox="0 0 8 5" ><path d="M0 0 H7.5 L3.75 4.2 Z" fill="#1a1a1a"/></svg>
<svg style="left:625px;top:54px" width="3" height="15" viewBox="0 0 3 15" ><rect x="0" y="0" width="2" height="2" fill="#b8a890"/><rect x="0" y="4.3" width="2" height="2" fill="#b8a890"/><rect x="0" y="8.6" width="2" height="2" fill="#b8a890"/><rect x="0" y="12.9" width="2" height="2" fill="#b8a890"/></svg>
<svg style="left:634px;top:53px" width="16" height="16" viewBox="0 0 16 16" ><path d="M6.5 1.5 H14.5 V15.5 H4.5 V12" fill="#f8f8f8" stroke="#c8c8c8"/><path d="M8 5 H13 M8 8 H13 M8 11 H13" stroke="#ccc"/><path d="M2.5 0.5 H6.5 V6 H9 L4.5 10.5 L0 6 H2.5 Z" fill="#f6f6f6" stroke="#b4b4b4" stroke-linejoin="round"/><rect x="1" y="12" width="7" height="3" fill="#999"/></svg>
<svg style="left:656px;top:59px" width="8" height="5" viewBox="0 0 8 5" ><path d="M0 0 H7.5 L3.75 4.2 Z" fill="#6a6a6a"/></svg>
<svg style="left:672px;top:53px" width="16" height="16" viewBox="0 0 16 16" ><path d="M5.5 0.5 H14.5 V14.5 H9" fill="#f8f8f8" stroke="#c8c8c8"/><path d="M8 5 H13 M8 8 H13 M10 11 H13" stroke="#ccc"/><path d="M2.5 15.5 H6.5 V10 H9 L4.5 5.5 L0 10 H2.5 Z" fill="#f6f6f6" stroke="#b4b4b4" stroke-linejoin="round"/><rect x="3" y="1" width="6" height="3" fill="#aaa"/></svg>
<svg style="left:694px;top:59px" width="8" height="5" viewBox="0 0 8 5" ><path d="M0 0 H7.5 L3.75 4.2 Z" fill="#6a6a6a"/></svg>
<svg style="left:708px;top:53px" width="17" height="16" viewBox="0 0 17 16" ><path d="M5.5 4 L1 8.5 L5.5 13 V10.5 H15.5 V6.5 H5.5 Z" fill="#f6f6f6" stroke="#b4b4b4" stroke-linejoin="round"/><path d="M1 1 L5 5 M5 1 L1 5 M3 0 V6 M0 3 H6" stroke="#888" stroke-width="0.9"/></svg>
<svg style="left:731px;top:53px" width="17" height="16" viewBox="0 0 17 16" ><path d="M11 4 L15.5 8.5 L11 13 V10.5 H1 V6.5 H11 Z" fill="#f6f6f6" stroke="#b4b4b4" stroke-linejoin="round"/><path d="M11 1 L15 5 M15 1 L11 5 M13 0 V6 M10 3 H16" stroke="#888" stroke-width="0.9"/></svg>
<svg style="left:755px;top:53px" width="16" height="16" viewBox="0 0 16 16" ><path d="M6.5 2.5 L0.8 8.5 L6.5 14.5 V11 H14.5 V6 H6.5 Z" fill="#fde9a8" stroke="#d89a20" stroke-width="1.3" stroke-linejoin="round"/></svg>
<svg style="left:778px;top:59px" width="8" height="5" viewBox="0 0 8 5" ><path d="M0 0 H7.5 L3.75 4.2 Z" fill="#1a1a1a"/></svg>
<svg style="left:793px;top:53px" width="16" height="16" viewBox="0 0 16 16" ><path d="M9 2.5 L14.7 8.5 L9 14.5 V11 H1 V6 H9 Z" fill="#f6f6f6" stroke="#b4b4b4" stroke-width="1.2" stroke-linejoin="round"/></svg>
<svg style="left:816px;top:59px" width="8" height="5" viewBox="0 0 8 5" ><path d="M0 0 H7.5 L3.75 4.2 Z" fill="#6a6a6a"/></svg>
<div class="a" style="left:829px;top:52px;width:1px;height:18px;background:#8c8c8c"></div>
<svg style="left:837px;top:53px" width="17" height="16" viewBox="0 0 17 16" ><rect x="0.5" y="3.5" width="13" height="11" fill="#eef7fd" stroke="#9a8a5a"/><rect x="1" y="4" width="12" height="2" fill="#4a9ae0"/><path d="M8 9 L14 2.5 Q15.5 1.5 16 3 L10 9.5 Z" fill="#3a9a3a" stroke="#1a6a1a" stroke-width="0.8"/><path d="M7 11 L8.5 9 L10 10.2 Z" fill="#333"/></svg>
<svg style="left:859px;top:54px" width="3" height="15" viewBox="0 0 3 15" ><rect x="0" y="0" width="2" height="2" fill="#b8a890"/><rect x="0" y="4.3" width="2" height="2" fill="#b8a890"/><rect x="0" y="8.6" width="2" height="2" fill="#b8a890"/><rect x="0" y="12.9" width="2" height="2" fill="#b8a890"/></svg>
<svg style="left:867px;top:53px" width="16" height="16" viewBox="0 0 16 16" ><path d="M5.5 3.5 L0.5 9 L5.5 15 V12 Q13 12 14.5 6 Q15 3 13.5 0.5 Q12 5 5.5 6 Z" fill="#f6f6f6" stroke="#a8a8a8" stroke-width="1.1" stroke-linejoin="round"/></svg>
<svg style="left:888px;top:53px" width="16" height="16" viewBox="0 0 16 16" ><path d="M10 3.5 L15 9 L10 15 V12 Q2.5 12 1 6 Q0.5 3 2 0.5 Q3.5 5 10 6 Z" fill="#f6f6f6" stroke="#a8a8a8" stroke-width="1.1" stroke-linejoin="round"/></svg>
<div class="a" style="left:909px;top:50px;width:66px;height:22px;background:#fff;border:1px solid #d0d0d0;border-radius:2px"></div>
<div class="a" style="left:912px;top:53px;width:43px;height:16px;background:#f0f0f0"></div>
<svg style="left:961px;top:58px" width="10" height="6" viewBox="0 0 10 6" ><path d="M0.5 0.5 L4.8 4.8 L9 0.5" fill="none" stroke="#888" stroke-width="1"/></svg>
<svg style="left:979px;top:53px" width="15" height="16" viewBox="0 0 15 16" ><rect x="2.5" y="1.5" width="9" height="4" fill="#fff" stroke="#555"/><rect x="0.5" y="7.5" width="13" height="4" fill="#fff" stroke="#555"/><rect x="1" y="13" width="13" height="3" fill="#555"/><path d="M14.5 0 V16" stroke="#555"/></svg>
<svg style="left:1002px;top:59px" width="8" height="5" viewBox="0 0 8 5" ><path d="M0 0 H7.5 L3.75 4.2 Z" fill="#444"/></svg>
<svg style="left:1016px;top:53px" width="16" height="16" viewBox="0 0 16 16" ><path d="M0.5 0 V16" stroke="#666" stroke-width="1.2"/><rect x="3.5" y="1.5" width="5" height="5" fill="#fff" stroke="#666"/><rect x="3.5" y="8.5" width="11" height="5" fill="#fff" stroke="#666"/><rect x="9.5" y="13.5" width="5" height="2" fill="#fff" stroke="#666"/></svg>
<svg style="left:1039px;top:53px" width="16" height="16" viewBox="0 0 16 16" ><path d="M0 0.5 H16 M0 15.5 H16" stroke="#666" stroke-width="1.1"/><rect x="1.5" y="3.5" width="4" height="7" fill="#fff" stroke="#666"/><rect x="7.5" y="3.5" width="4" height="10" fill="#fff" stroke="#666"/><rect x="12.5" y="9.5" width="3" height="4" fill="#fff" stroke="#666"/></svg>
<svg style="left:1062px;top:53px" width="15" height="16" viewBox="0 0 15 16" ><g fill="#777"><rect x="0" y="1" width="1.2" height="1.5"/><rect x="0" y="5" width="1.2" height="1.5"/><rect x="0" y="9" width="1.2" height="1.5"/><rect x="0" y="13" width="1.2" height="1.5"/><rect x="10" y="1" width="1.5" height="1.2"/><rect x="13" y="1" width="1.5" height="1.2"/><rect x="10" y="5" width="1.5" height="1.2"/><rect x="13" y="5" width="1.5" height="1.2"/></g><rect x="2.5" y="1.5" width="4" height="5" fill="#fff" stroke="#777"/><rect x="3.5" y="9.5" width="9" height="5" fill="#fff" stroke="#777"/></svg>
<svg style="left:1088px;top:53px" width="12" height="16" viewBox="0 0 12 16" ><path d="M0.5 0 V16" stroke="#666" stroke-width="1"/><rect x="2.5" y="2.5" width="8" height="4" fill="#fff" stroke="#666"/><rect x="2.5" y="10.5" width="8" height="4" fill="#fff" stroke="#666"/><path d="M0 9 H3" stroke="#666"/></svg>
<svg style="left:1108px;top:53px" width="17" height="17" viewBox="0 0 17 17" ><rect x="0.5" y="0.5" width="5" height="5" fill="#fff" stroke="#666"/><rect x="8.5" y="10.5" width="7" height="5" fill="#fff" stroke="#666"/><path d="M4 4 L10 10" stroke="#666" stroke-width="1.4"/></svg>
<svg style="left:1135px;top:53px" width="10" height="16" viewBox="0 0 10 16" ><path d="M8.5 1 L1 15" stroke="#666" stroke-width="1.3"/></svg>
<svg style="left:1155px;top:59px" width="8" height="5" viewBox="0 0 8 5" ><path d="M0 0 H7.5 L3.75 4.2 Z" fill="#555"/></svg>
<svg style="left:1168px;top:53px" width="17" height="17" viewBox="0 0 17 17" ><g stroke="#777" stroke-width="1.3" fill="none"><path d="M1 6 V1 H6 M1 1 L6 6 M11 1 H16 V6 M16 1 L11 6 M1 11 V16 H6 M1 16 L6 11 M16 11 V16 H11 M16 16 L11 11"/></g></svg>
<svg style="left:1192px;top:53px" width="17" height="17" viewBox="0 0 17 17" ><g stroke="#777" stroke-width="1.3" fill="none"><path d="M2 6.5 H6.5 V2 M6.5 6.5 L1 1 M10.5 2 V6.5 H15 M10.5 6.5 L16 1 M2 10.5 H6.5 V15 M6.5 10.5 L1 16 M15 10.5 H10.5 V15 M10.5 10.5 L16 16"/></g></svg>
<svg style="left:1216px;top:53px" width="16" height="16" viewBox="0 0 16 16" ><rect x="0.8" y="2.8" width="13" height="12" rx="2" fill="#fff" stroke="#555" stroke-width="1.4"/><path d="M1 6 H14" stroke="#555" stroke-width="1.5"/><circle cx="12" cy="3.5" r="3" fill="#aaa" stroke="#555"/></svg>
<svg style="left:1237px;top:48px" width="99" height="25" viewBox="0 0 99 25" ><rect x="4" y="2" width="1" height="3" fill="#b0b0b0"/><rect x="4" y="20" width="1" height="3" fill="#b0b0b0"/><rect x="13" y="2" width="1" height="3" fill="#b0b0b0"/><rect x="13" y="20" width="1" height="3" fill="#b0b0b0"/><rect x="22" y="2" width="1" height="3" fill="#b0b0b0"/><rect x="22" y="20" width="1" height="3" fill="#b0b0b0"/><rect x="31" y="2" width="1" height="3" fill="#b0b0b0"/><rect x="31" y="20" width="1" height="3" fill="#b0b0b0"/><rect x="40" y="2" width="1" height="3" fill="#b0b0b0"/><rect x="40" y="20" width="1" height="3" fill="#b0b0b0"/><rect x="49" y="2" width="1" height="3" fill="#b0b0b0"/><rect x="49" y="20" width="1" height="3" fill="#b0b0b0"/><rect x="58" y="2" width="1" height="3" fill="#b0b0b0"/><rect x="58" y="20" width="1" height="3" fill="#b0b0b0"/><rect x="67" y="2" width="1" height="3" fill="#b0b0b0"/><rect x="67" y="20" width="1" height="3" fill="#b0b0b0"/><rect x="76" y="2" width="1" height="3" fill="#b0b0b0"/><rect x="76" y="20" width="1" height="3" fill="#b0b0b0"/><rect x="85" y="2" width="1" height="3" fill="#b0b0b0"/><rect x="85" y="20" width="1" height="3" fill="#b0b0b0"/><rect x="94" y="2" width="1" height="3" fill="#b0b0b0"/><rect x="94" y="20" width="1" height="3" fill="#b0b0b0"/><rect x="4" y="10.5" width="95" height="1.5" fill="#c8c8c8"/><rect x="0.5" y="7.5" width="6" height="11" rx="3" fill="#f8f8f8" stroke="#e0e0e0"/></svg>
<svg style="left:1274px;top:79px" width="16" height="15" viewBox="0 0 16 15" ><circle cx="5.8" cy="5.6" r="4.6" fill="none" stroke="#6a6a6a" stroke-width="1.9"/><path d="M9 9 L14.5 14.3" stroke="#6a6a6a" stroke-width="2.3"/></svg>
<svg style="left:1305px;top:79px" width="3" height="15" viewBox="0 0 3 15" ><rect x="0" y="0" width="2" height="2" fill="#c0b090"/><rect x="0" y="4.2" width="2" height="2" fill="#c0b090"/><rect x="0" y="8.4" width="2" height="2" fill="#c0b090"/><rect x="0" y="12.6" width="2" height="2" fill="#c0b090"/></svg>
<svg style="left:1312px;top:78px" width="16" height="16" viewBox="0 0 16 16" ><rect x="0.5" y="3.5" width="12.5" height="11" rx="1" fill="#e2f0fa" stroke="#8a7a50"/><path d="M1 9 H13 M5.5 6.5 V14" stroke="#8a7a50"/><rect x="1" y="4" width="11.5" height="2.2" fill="#5a9ae0"/><path d="M11 0.5 L12.5 3 L15 4 L12.5 5 L11 7.5 L9.5 5 L7 4 L9.5 3 Z" fill="#fff4c0" stroke="#c09020" stroke-width="0.9"/></svg>
<div class="a" style="left:1334px;top:78px;width:1px;height:17px;background:#555"></div>
<div class="a" style="left:0;top:0;width:308px;height:530px;overflow:hidden"><div class="t" style="left:38.00px;top:150.84px;font-size:12px;line-height:12px;transform:scaleX(1.0545)">Config</div>
<div class="t" style="left:38.00px;top:168.84px;font-size:12px;line-height:12px;transform:scaleX(1.0069)">EnactorHome</div>
<div class="t" style="left:38.00px;top:186.84px;font-size:12px;line-height:12px;transform:scaleX(0.9647)">General Runtime Dependencies</div>
<div class="t" style="left:206.00px;top:186.84px;font-size:12px;line-height:12px;color:#9c7e48">(in GeneralRuntime</div>
<div class="t" style="left:38.00px;top:204.84px;font-size:12px;line-height:12px;transform:scaleX(0.9050)">Servers</div>
<div class="t" style="left:38.00px;top:222.84px;font-size:12px;line-height:12px;transform:scaleX(0.9786)">Training Parent POM</div>
<div class="t" style="left:151.00px;top:222.84px;font-size:12px;line-height:12px;color:#9c7e48;transform:scaleX(1.0051)">(in CustomerProducts)</div>
<div class="t" style="left:38.00px;top:240.84px;font-size:12px;line-height:12px;transform:scaleX(0.9517)">TrainingPOSExtension</div>
<div class="t" style="left:53.00px;top:258.84px;font-size:12px;line-height:12px;transform:scaleX(0.9933)">src</div>
<div class="t" style="left:69.00px;top:276.84px;font-size:12px;line-height:12px;transform:scaleX(0.9836)">META-INF</div>
<div class="t" style="left:85.00px;top:294.84px;font-size:12px;line-height:12px;transform:scaleX(1.0179)">deployments</div>
<div class="t" style="left:102.00px;top:312.84px;font-size:12px;line-height:12px;transform:scaleX(0.9434)">MessageResource</div>
<div class="t" style="left:102.00px;top:330.84px;font-size:12px;line-height:12px;transform:scaleX(0.9405)">Process</div>
<div class="t" style="left:117.00px;top:348.84px;font-size:12px;line-height:12px;transform:scaleX(0.9200)">Pos</div>
<div class="t" style="left:134.00px;top:366.84px;font-size:12px;line-height:12px">SignOn</div>
<div class="t" style="left:149.00px;top:384.84px;font-size:12px;line-height:12px;transform:scaleX(0.9679)">PreSignOnValidationExtension</div>
<div class="t" style="left:85.00px;top:402.84px;font-size:12px;line-height:12px;transform:scaleX(0.9616)">Packages.xml</div>
<div class="t" style="left:53.00px;top:420.84px;font-size:12px;line-height:12px;transform:scaleX(0.9171)">JRE System Library</div>
<div class="t" style="left:154.00px;top:420.84px;font-size:12px;line-height:12px;color:#9c7e48;transform:scaleX(0.9016)">[JavaSE-17]</div>
<div class="t" style="left:53.00px;top:438.84px;font-size:12px;line-height:12px;transform:scaleX(0.9809)">Maven Dependencies</div>
<div class="t" style="left:53.00px;top:456.84px;font-size:12px;line-height:12px;transform:scaleX(0.9929)">src-js</div>
<div class="t" style="left:54.00px;top:474.84px;font-size:12px;line-height:12px;transform:scaleX(0.9935)">target</div>
<div class="t" style="left:53.00px;top:492.84px;font-size:12px;line-height:12px;transform:scaleX(1.0545)">pom.xml</div>
<div class="t" style="left:53.00px;top:510.84px;font-size:12px;line-height:12px;transform:scaleX(0.9764)">UpdatePackage.xml</div></div>
<div class="t" style="left:27.00px;top:8.54px;font-size:12px;line-height:12px;transform:scaleX(0.9782)">Workspace - TrainingPOSExtension/src/META-INF/deployments/Process/Pos/SignOn/PreSignOnValidationExtensionImplementation_1.0.xml - Eclipse IDE</div>
<div class="t" style="left:3.00px;top:34.14px;font-size:12px;line-height:12px;transform:scaleX(1.0222)">File</div>
<div class="t" style="left:35.00px;top:34.14px;font-size:12px;line-height:12px">Edit</div>
<div class="t" style="left:69.00px;top:34.14px;font-size:12px;line-height:12px;transform:scaleX(1.0152)">Navigate</div>
<div class="t" style="left:130.00px;top:34.14px;font-size:12px;line-height:12px;transform:scaleX(0.9417)">Search</div>
<div class="t" style="left:179.00px;top:34.14px;font-size:12px;line-height:12px;transform:scaleX(1.0111)">Project</div>
<div class="t" style="left:230.00px;top:34.14px;font-size:12px;line-height:12px;transform:scaleX(1.0100)">Run</div>
<div class="t" style="left:266.00px;top:34.14px;font-size:12px;line-height:12px;transform:scaleX(1.0163)">Window</div>
<div class="t" style="left:323.00px;top:34.14px;font-size:12px;line-height:12px;transform:scaleX(1.0522)">Help</div>
<div class="t" style="left:22.00px;top:107.54px;font-size:12px;line-height:12px;transform:scaleX(0.9583)">Project Explorer</div>
<div class="t" style="left:153.00px;top:107.64px;font-size:12px;line-height:12px;transform:scaleX(0.9050)">Servers</div>
<div class="t" style="left:337.00px;top:107.84px;font-size:12px;line-height:12px;transform:scaleX(0.9837)">PreSignOnValidationExtensionImplementation_1.0.xml</div>
<div class="t" style="left:388.00px;top:138.91px;font-size:10.5px;line-height:10.5px;font-weight:bold;color:#fff;transform:scaleX(1.0100)">Process</div>
<div class="t" style="left:327.00px;top:160.11px;font-size:10.5px;line-height:10.5px;transform:scaleX(1.0906)">Pos/SignOn/PreSignOnValidat...</div>
<div class="t" style="left:343.00px;top:182.01px;font-size:10.5px;line-height:10.5px;font-weight:bold;transform:scaleX(1.0800)">Inputs</div>
<div class="t" style="left:327.00px;top:193.81px;font-size:10.5px;line-height:10.5px;transform:scaleX(1.1364)">No Inputs</div>
<div class="t" style="left:343.00px;top:217.01px;font-size:10.5px;line-height:10.5px;font-weight:bold;transform:scaleX(1.0692)">Outputs</div>
<div class="t" style="left:327.00px;top:228.81px;font-size:10.5px;line-height:10.5px;transform:scaleX(1.1558)">No Outputs</div>
<div class="t" style="left:343.00px;top:252.01px;font-size:10.5px;line-height:10.5px;font-weight:bold;transform:scaleX(1.0255)">State Data</div>
<div class="t" style="left:327.00px;top:263.81px;font-size:10.5px;line-height:10.5px;transform:scaleX(1.0723)">No State Data</div>
<div class="t" style="left:343.00px;top:287.01px;font-size:10.5px;line-height:10.5px;font-weight:bold;transform:scaleX(1.0271)">Privileges</div>
<div class="t" style="left:327.00px;top:298.81px;font-size:10.5px;line-height:10.5px;transform:scaleX(1.0689)">No Privileges</div>
<div class="t" style="left:621.00px;top:309.31px;font-size:10.5px;line-height:10.5px;font-weight:bold;color:#fff;transform:scaleX(1.0792)">State</div>
<div class="t" style="left:621.00px;top:330.31px;font-size:10.5px;line-height:10.5px;transform:scaleX(1.1043)">State</div>
<div class="t" style="left:568.00px;top:352.91px;font-size:10.5px;line-height:10.5px;font-weight:bold;transform:scaleX(1.0273)">Events</div>
<div class="t" style="left:673.00px;top:352.91px;font-size:10.5px;line-height:10.5px;transform:scaleX(1.1229)">Unused</div>
<div class="t" style="left:552.00px;top:366.11px;font-size:10.5px;line-height:10.5px;transform:scaleX(1.0833)">StateEntered</div>
<div class="t" style="left:568.00px;top:388.91px;font-size:10.5px;line-height:10.5px;font-weight:bold;transform:scaleX(1.0800)">Inputs</div>
<div class="t" style="left:552.00px;top:400.71px;font-size:10.5px;line-height:10.5px;transform:scaleX(1.1341)">No Inputs</div>
<div class="t" style="left:568.00px;top:424.01px;font-size:10.5px;line-height:10.5px;font-weight:bold;transform:scaleX(1.0615)">Outputs</div>
<div class="t" style="left:552.00px;top:435.81px;font-size:10.5px;line-height:10.5px;transform:scaleX(1.1519)">No Outputs</div>
<div class="t" style="left:568.00px;top:459.11px;font-size:10.5px;line-height:10.5px;font-weight:bold;transform:scaleX(1.0314)">State Data</div>
<div class="t" style="left:552.00px;top:470.91px;font-size:10.5px;line-height:10.5px;transform:scaleX(1.0785)">No State Data</div>
<div class="t" style="left:870.00px;top:310.11px;font-size:10.5px;line-height:10.5px;font-weight:bold;color:#fff;transform:scaleX(1.0333)">Message State</div>
<div class="t" style="left:829.00px;top:330.91px;font-size:10.5px;line-height:10.5px;transform:scaleX(1.1057)">PreSignOnValidationExtension</div>
<div class="t" style="left:842.00px;top:353.91px;font-size:10.5px;line-height:10.5px;font-weight:bold;transform:scaleX(1.0061)">Events</div>
<div class="t" style="left:948.00px;top:353.91px;font-size:10.5px;line-height:10.5px;transform:scaleX(1.1000)">Unused</div>
<div class="t" style="left:826.00px;top:366.91px;font-size:10.5px;line-height:10.5px;transform:scaleX(1.0096)">OKPressed</div>
<div class="t" style="left:842.00px;top:390.31px;font-size:10.5px;line-height:10.5px;font-weight:bold;transform:scaleX(1.0767)">Inputs</div>
<div class="t" style="left:826.00px;top:402.31px;font-size:10.5px;line-height:10.5px;transform:scaleX(1.0559)">* messageBase = TrainingPOS...</div>
<div class="t" style="left:826.00px;top:415.81px;font-size:10.5px;line-height:10.5px;transform:scaleX(1.0841)">* messageId = PreSignOnVali...</div>
<div class="t" style="left:842.00px;top:438.81px;font-size:10.5px;line-height:10.5px;font-weight:bold;transform:scaleX(1.0275)">State Data</div>
<div class="t" style="left:826.00px;top:450.81px;font-size:10.5px;line-height:10.5px;transform:scaleX(1.0323)">messageBase</div>
<div class="t" style="left:826.00px;top:464.71px;font-size:10.5px;line-height:10.5px;transform:scaleX(1.0680)">messageId</div>
<div class="t" style="left:1181.00px;top:359.01px;font-size:10.5px;line-height:10.5px;font-weight:bold;color:#fff;transform:scaleX(0.9887)">End Process</div>
<div class="t" style="left:1181.00px;top:380.11px;font-size:10.5px;line-height:10.5px;transform:scaleX(1.0276)">End Process</div>
</body></html>
